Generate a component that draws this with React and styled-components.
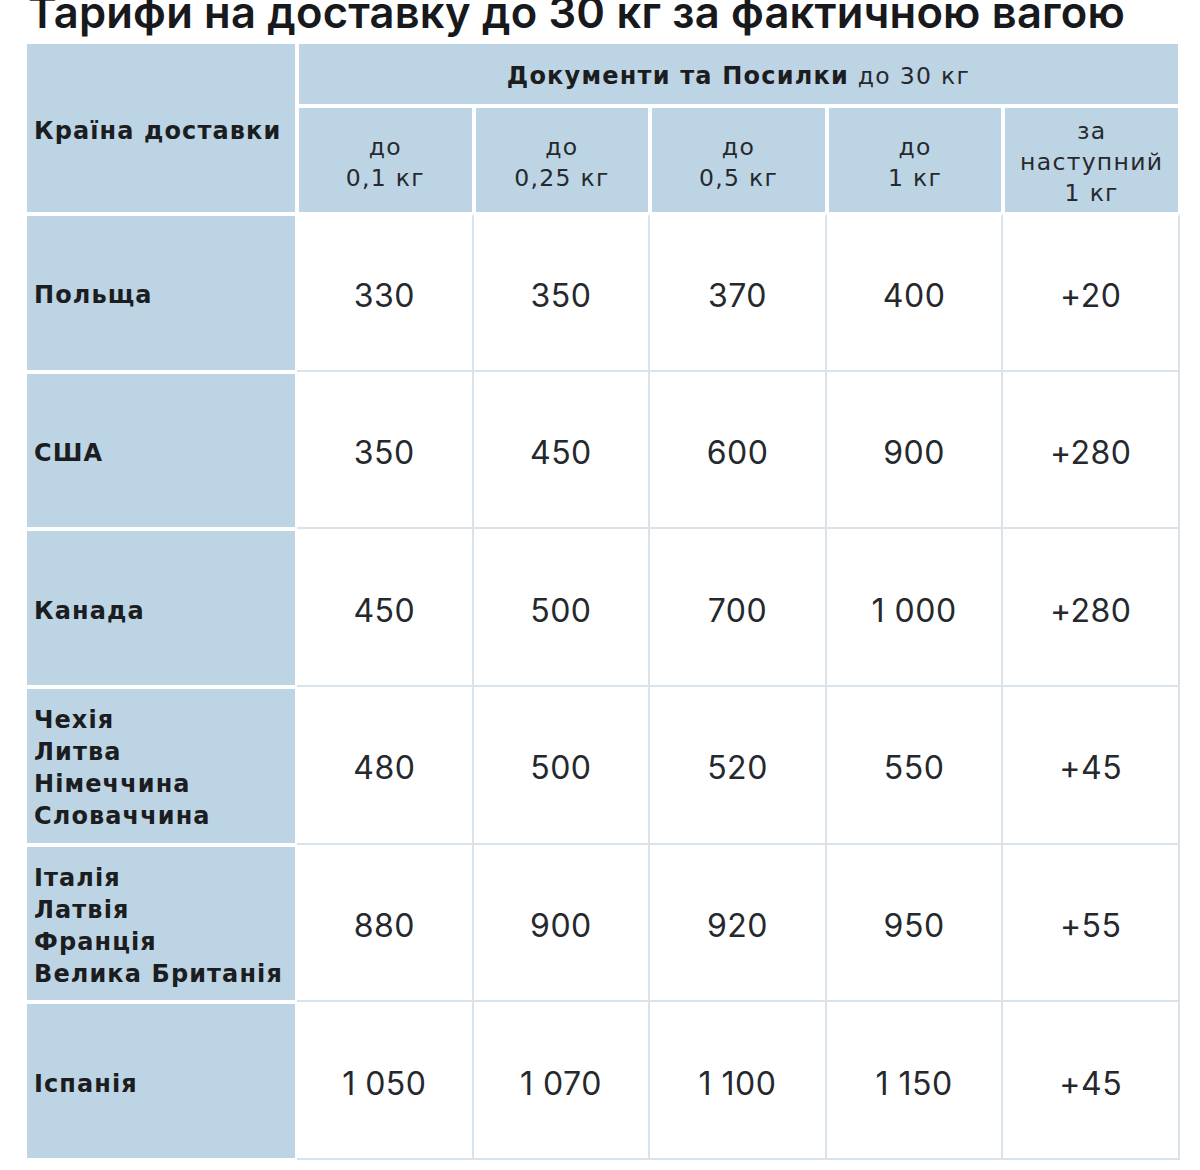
import React from 'react';
import styled, { createGlobalStyle } from 'styled-components';

const GlobalStyle = createGlobalStyle`
  html, body {
    margin: 0;
    padding: 0;
    background: #ffffff;
  }
  body {
    font-family: Inter, "Noto Sans", sans-serif;
    color: #1f2226;
  }
`;

const Page = styled.div`
  width: 1200px;
  height: 1170px;
  overflow: hidden;
  padding: 0 20px 0 25px;
  box-sizing: border-box;
`;

const Title = styled.h1`
  margin: 0;
  height: 42px;
  padding-left: 3px;
  font-family: Inter, "Noto Sans", sans-serif;
  font-weight: 600;
  font-size: 43.5px;
  line-height: 21px;
  padding-top: 2px;
  box-sizing: border-box;
  letter-spacing: 0.2px;
  color: #17191c;
  white-space: nowrap;
`;

const Grid = styled.div`
  display: grid;
  grid-template-columns: 272px repeat(5, 1fr);
  grid-template-rows: 64px 108px repeat(6, 157.7px);
`;

const HeadCell = styled.div`
  box-sizing: border-box;
  background: #bdd4e4;
  border: 2px solid #ffffff;
  display: flex;
  align-items: center;
  justify-content: ${(p) => (p.$left ? 'flex-start' : 'center')};
  text-align: ${(p) => (p.$left ? 'left' : 'center')};
  padding: ${(p) => (p.$left ? '6px 0 0 7px' : '5px 2px 0')};
  grid-column: ${(p) => p.$col || 'auto'};
  grid-row: ${(p) => p.$row || 'auto'};
  font-family: "DejaVu Sans", sans-serif;
  font-size: 23.5px;
  line-height: 31px;
  letter-spacing: 1.3px;
  color: #26292d;
`;

const Strong = styled.b`
  font-family: "DejaVu Sans", sans-serif;
  font-weight: 700;
  font-size: 24px;
  letter-spacing: ${(p) => p.$spacing || 1.1}px;
  color: #1b1d20;
`;

const CountryCell = styled.div`
  box-sizing: border-box;
  background: #bdd4e4;
  border: 2px solid #ffffff;
  display: flex;
  align-items: center;
  padding: 5px 0 0 7px;
  font-family: "DejaVu Sans", sans-serif;
  font-weight: 700;
  font-size: 24px;
  line-height: 32px;
  letter-spacing: 1.1px;
  color: #1b1d20;
`;

const DataCell = styled.div`
  box-sizing: border-box;
  background: #ffffff;
  border-right: 2px solid #d9e3ec;
  border-bottom: 2px solid #d9e3ec;
  border-top: ${(p) => (p.$first ? '2px solid #ffffff' : '0')};
  display: flex;
  align-items: center;
  justify-content: center;
  padding-top: 6px;
  font-size: 32px;
  font-weight: 400;
  letter-spacing: 0.5px;
  color: #25282c;
`;

const weights = [
  ['до', '0,1 кг'],
  ['до', '0,25 кг'],
  ['до', '0,5 кг'],
  ['до', '1 кг'],
  ['за', 'наступний', '1 кг'],
];

const rows = [
  { countries: ['Польща'], prices: ['330', '350', '370', '400', '+20'] },
  { countries: ['США'], prices: ['350', '450', '600', '900', '+280'] },
  { countries: ['Канада'], prices: ['450', '500', '700', '1 000', '+280'] },
  {
    countries: ['Чехія', 'Литва', 'Німеччина', 'Словаччина'],
    prices: ['480', '500', '520', '550', '+45'],
  },
  {
    countries: ['Італія', 'Латвія', 'Франція', 'Велика Британія'],
    prices: ['880', '900', '920', '950', '+55'],
  },
  { countries: ['Іспанія'], prices: ['1 050', '1 070', '1 100', '1 150', '+45'] },
];

export default function App() {
  return (
    <Page>
      <GlobalStyle />
      <Title>Тарифи на доставку до 30 кг за фактичною вагою</Title>
      <Grid>
        <HeadCell $left $row="1 / span 2" $col="1">
          <Strong>Країна доставки</Strong>
        </HeadCell>
        <HeadCell $col="2 / span 5">
          <span>
            <Strong $spacing={1.2}>Документи та Посилки</Strong> до 30 кг
          </span>
        </HeadCell>
        {weights.map((lines, i) => (
          <HeadCell key={i}>
            <span>
              {lines.map((l, j) => (
                <div key={j}>{l}</div>
              ))}
            </span>
          </HeadCell>
        ))}
        {rows.map((row, r) => (
          <React.Fragment key={r}>
            <CountryCell>
              <div>
                {row.countries.map((c) => (
                  <div key={c}>{c}</div>
                ))}
              </div>
            </CountryCell>
            {row.prices.map((p, i) => (
              <DataCell key={i} $first={r === 0}>
                {p}
              </DataCell>
            ))}
          </React.Fragment>
        ))}
      </Grid>
    </Page>
  );
}
